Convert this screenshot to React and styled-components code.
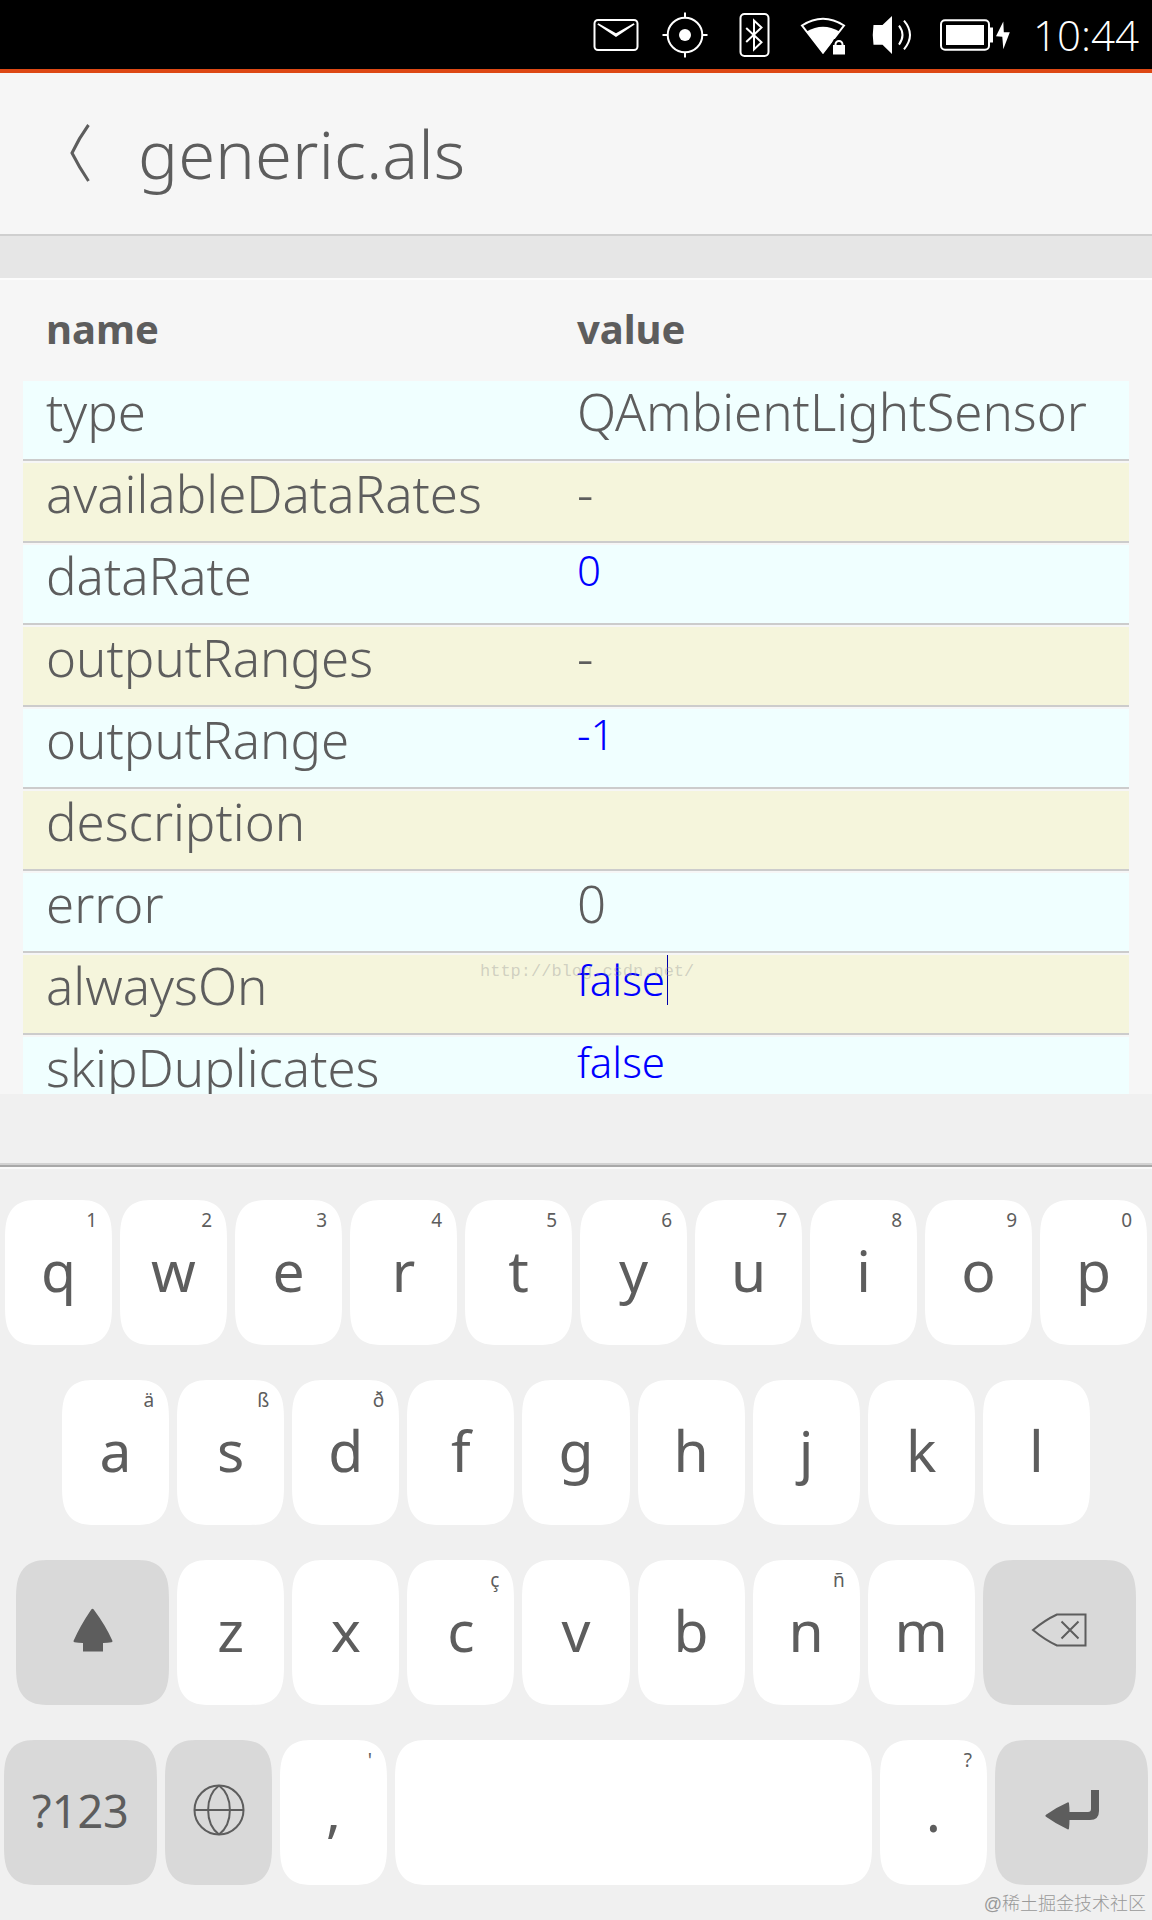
import React from "react";
import styled, { createGlobalStyle } from "styled-components";

const rows = [
  { name: "type", value: "QAmbientLightSensor" },
  { name: "availableDataRates", value: "-" },
  { name: "dataRate", value: "0", editable: true },
  { name: "outputRanges", value: "-" },
  { name: "outputRange", value: "-1", editable: true },
  { name: "description", value: "" },
  { name: "error", value: "0" },
  { name: "alwaysOn", value: "false", editable: true, active: true },
  { name: "skipDuplicates", value: "false", editable: true },
];

const topKeys = "qwertyuiop".split("");
const topHints = "1234567890".split("");
const middleKeys = "asdfghjkl".split("");
const bottomKeys = "zxcvbnm".split("");
const hints = { a: "ä", s: "ß", d: "ð", c: "ç", n: "ñ" };

const StatusIcons = () => (
  <>
    <Icon width="46" height="46" viewBox="0 0 46 46">
      <rect x="1.5" y="8" width="43" height="30" rx="3.5" />
      <path
        className="solid"
        d="M4.3 12.6 5.4 11.2 23 21.2 40.6 11.2 41.7 12.6 23 25z"
      />
    </Icon>
    <Icon width="46" height="46" viewBox="0 0 46 46">
      <circle cx="23" cy="23" r="17.3" />
      <circle className="solid" cx="23" cy="23" r="6" />
      <path d="M23 .5v5M23 40.5v5M.5 23h5M40.5 23h5" />
    </Icon>
    <Icon width="46" height="46" viewBox="0 0 46 46">
      <rect x="9.5" y="2" width="28" height="42" rx="4" />
      <path d="M15.2 16 30.5 30.3 23 37.5V8.5L30.5 15.5 15.2 30" />
    </Icon>
    <Icon width="46" height="46" viewBox="0 0 46 46">
      <path d="M2 13.5Q23 0 44 13.5L23 40.5z" />
      <path className="solid" d="M6.5 19.5Q23 10 39.5 19.5L23 41.5z" />
      <path className="halo" d="M31 46V33l3-6h7l4 6v13z" />
      <rect className="solid" x="33" y="33" width="12" height="9.5" />
      <path d="M35.5 34v-1.5a3.5 3.5 0 0 1 7 0V34" />
    </Icon>
    <Icon width="46" height="46" viewBox="0 0 46 46">
      <path className="solid" d="M4.5 13h9L23 4v38l-9.500-9.300h-9Q3 23 4.500 13z" />
      <path d="M30 13.7q7 9.300 0 19M35 8.700q12 14.300 0 28.600" />
    </Icon>
    <Icon width="72" height="46" viewBox="0 0 72 46">
      <rect x="3" y="8.3" width="48" height="29.5" rx="4" />
      <rect className="solid" x="8" y="13" width="38" height="20" />
      <rect className="solid" x="51.5" y="15.5" width="3.5" height="15" />
      <path
        className="solid"
        d="M65.3 9.5 58 24.3l6.3.5 1 12.5 6.500-17h-6z"
      />
    </Icon>
  </>
);

const ShiftIcon = () => (
  <KeyIcon width="40" height="44" viewBox="0 0 40 44">
    <path d="M18.3 1.5q1.2-1.5 2.4 0Q33 18 39.5 33q.2 1-1 1.2-4 .8-8.5.8v8.5H10V35q-4.5 0-8.5-.8-1.2-.2-1-1.2Q7 18 18.3 1.5z" />
  </KeyIcon>
);

const GlobeIcon = () => (
  <KeyIcon $line width="52" height="52" viewBox="0 0 52 52">
    <circle cx="26" cy="26" r="24.5" />
    <path d="M1.5 26h49M26 1.500c-14.500 11-14.500 38 0 49M26 1.500c14.500 11 14.500 38 0 49" />
  </KeyIcon>
);

const BackspaceIcon = () => (
  <KeyIcon $line width="56" height="34" viewBox="0 0 56 34">
    <path d="M26 1.5h28.5v31H26Q14 27 2 17 14 7 26 1.5zM30.5 8.5l17 17M47.5 8.5l-17 17" />
  </KeyIcon>
);

const EnterIcon = () => (
  <KeyIcon width="54" height="40" viewBox="0 0 54 40">
    <path d="M46 0h8v21q0 9-9 9H24.5q0 4-.5 8.5-.3 1.200-1.500.8Q11 34 1 26.8q-1.200-1 0-2Q11 17.5 22.5 12.5q1.200-.5 1.500.7.5 4.500.5 8.800H43q3 0 3-3z" />
  </KeyIcon>
);

const LetterKey = ({ label, hint }) => (
  <Key>
    {label}
    {hint && <Hint>{hint}</Hint>}
  </Key>
);

const App = () => {
  return (
    <Page>
      <GlobalStyle />
      <StatusBar>
        <StatusIcons />
        <Clock>10:44</Clock>
      </StatusBar>

      <Header>
        <BackButton aria-label="Back">
          <svg width="20" height="58" viewBox="0 0 20 58">
            <path d="M18.5 1Q9 14 2 29q7 14 16.5 28" />
          </svg>
        </BackButton>
        <h1>generic.als</h1>
      </Header>
      <Divider />

      <Content>
        <Table>
          <thead>
            <tr>
              <th scope="col">name</th>
              <th scope="col">value</th>
            </tr>
          </thead>
          <tbody>
            {rows.map((row) => (
              <tr key={row.name}>
                <td>{row.name}</td>
                <td>
                  {row.editable ? (
                    <Field>
                      <input aria-label={row.name} defaultValue={row.value} />
                      {row.active && <Caret />}
                    </Field>
                  ) : (
                    row.value
                  )}
                </td>
              </tr>
            ))}
          </tbody>
        </Table>
        <SiteMark>http://blog.csdn.net/</SiteMark>
      </Content>

      <Keyboard>
        <Suggestions />
        <KeyRows>
          <KeyRow $inset={5}>
            {topKeys.map((key, i) => (
              <LetterKey key={key} label={key} hint={topHints[i]} />
            ))}
          </KeyRow>
          <KeyRow $inset={62}>
            {middleKeys.map((key) => (
              <LetterKey key={key} label={key} hint={hints[key]} />
            ))}
          </KeyRow>
          <KeyRow $inset={16}>
            <Key $grow={153} $dark aria-label="Shift">
              <ShiftIcon />
            </Key>
            {bottomKeys.map((key) => (
              <LetterKey key={key} label={key} hint={hints[key]} />
            ))}
            <Key $grow={153} $dark aria-label="Backspace">
              <BackspaceIcon />
            </Key>
          </KeyRow>
          <KeyRow $inset={4}>
            <Key $grow={153} $dark $small>
              ?123
            </Key>
            <Key $dark aria-label="Language">
              <GlobeIcon />
            </Key>
            <LetterKey label="," hint="'" />
            <Key $grow={477} aria-label="Space" />
            <LetterKey label="." hint="?" />
            <Key $grow={153} $dark aria-label="Enter">
              <EnterIcon />
            </Key>
          </KeyRow>
        </KeyRows>
        <CommunityMark>@稀土掘金技术社区</CommunityMark>
      </Keyboard>
    </Page>
  );
};

const GlobalStyle = createGlobalStyle`
  * {
    box-sizing: border-box;
  }
  body {
    margin: 0;
    color: #5d5d5d;
    background-color: #f6f6f6;
    font-family: "Noto Sans", "Open Sans", sans-serif;
  }
  button, input {
    font-family: inherit;
    border: none;
    padding: 0;
  }
`;

const Page = styled.div`
  height: 100vh;
  display: flex;
  flex-direction: column;
`;

const StatusBar = styled.div`
  flex: none;
  height: 73px;
  padding: 0 13px;
  display: flex;
  align-items: center;
  justify-content: flex-end;
  gap: 23px;
  color: #fff;
  background-color: #000;
  border-bottom: 4px solid #dd4814;
`;

const Icon = styled.svg`
  fill: none;
  stroke: #fff;
  stroke-width: 2;
  .solid {
    fill: #fff;
    stroke: none;
  }
  .halo {
    fill: #000;
    stroke: none;
  }
`;

const Clock = styled.time`
  font-family: "Open Sans", sans-serif;
  font-size: 42px;
  font-weight: 350;
  line-height: 60px;
`;

const Header = styled.header`
  flex: none;
  height: 163px;
  padding: 0 70px 2px;
  display: flex;
  align-items: center;
  gap: 48px;
  border-bottom: 2px solid #cfcfcf;
  h1 {
    margin: 0;
    font-size: 67px;
    font-weight: 350;
  }
`;

const BackButton = styled.button`
  display: flex;
  background: none;
  svg {
    fill: none;
    stroke: #5d5d5d;
    stroke-width: 3;
  }
`;

const Divider = styled.div`
  flex: none;
  height: 44px;
  background-color: #e6e6e6;
  border-bottom: 2px solid #fcfcfc;
`;

const Content = styled.main`
  flex: 1;
  min-height: 0;
  padding: 0 23px;
  position: relative;
  overflow: hidden;
`;

const Table = styled.table`
  width: 100%;
  table-layout: fixed;
  border-spacing: 0 2px;
  th,
  td {
    padding: 0 0 0 23px;
    text-align: left;
    white-space: nowrap;
  }
  th:first-child {
    width: 48%;
  }
  th {
    height: 97px;
    padding-bottom: 4px;
    font-size: 40px;
    font-weight: 700;
  }
  td {
    height: 80px;
    font-size: 51px;
    font-weight: 350;
    line-height: 60px;
    vertical-align: top;
    border-bottom: 2px solid #cccccc;
    background-color: #f5f5dc;
  }
  tr:nth-child(odd) td {
    background-color: #f0ffff;
  }
`;

const Field = styled.div`
  display: flex;
  gap: 2px;
  input {
    field-sizing: content;
    height: 50px;
    color: #0000ff;
    background: none;
    font-size: 42px;
    font-weight: 350;
    line-height: 50px;
    outline: none;
  }
`;

const Caret = styled.span`
  width: 1px;
  height: 50px;
  background-color: #0000aa;
`;

const SiteMark = styled.div`
  position: absolute;
  top: 680px;
  left: 480px;
  color: rgba(150, 150, 150, 0.4);
  font-family: "Liberation Mono", monospace;
  font-size: 17px;
  line-height: 24px;
`;

const Keyboard = styled.section`
  flex: none;
  position: relative;
  background-color: #f0f0f0;
`;

const Suggestions = styled.div`
  height: 75px;
  border-bottom: 2px solid #fafafa;
  box-shadow: inset 0 -2px #a8a8a8, inset 0 -4px #d2d2d2;
`;

const KeyRows = styled.div`
  padding: 31px 0 35px;
  display: flex;
  flex-direction: column;
  gap: 35px;
`;

const KeyRow = styled.div`
  padding: 0 ${(props) => props.$inset}px;
  display: flex;
  gap: 8px;
`;

const Key = styled.button`
  flex: ${(props) => props.$grow || 107} 1 0;
  min-width: 0;
  height: 145px;
  padding-bottom: 5px;
  position: relative;
  display: flex;
  align-items: center;
  justify-content: center;
  color: #5d5d5d;
  background-color: ${(props) => (props.$dark ? "#d9d9d9" : "#fff")};
  border-radius: 26px / 30px;
  font-size: ${(props) => (props.$small ? 45 : 57)}px;

  @supports (corner-shape: squircle) {
    border-radius: 34px / 40px;
    corner-shape: superellipse(1.5);
  }
`;

const Hint = styled.span`
  position: absolute;
  top: 8px;
  right: 15px;
  font-size: 19px;
  line-height: 24px;
`;

const KeyIcon = styled.svg`
  fill: ${(props) => (props.$line ? "none" : "#5d5d5d")};
  stroke: ${(props) => (props.$line ? "#5d5d5d" : "none")};
  stroke-width: 2;
`;

const CommunityMark = styled.div`
  position: absolute;
  right: 6px;
  bottom: 4px;
  color: #999;
  font-family: "Liberation Sans", "Noto Sans CJK SC", sans-serif;
  font-size: 18px;
  font-weight: 300;
  line-height: 24px;
`;

export default App;
